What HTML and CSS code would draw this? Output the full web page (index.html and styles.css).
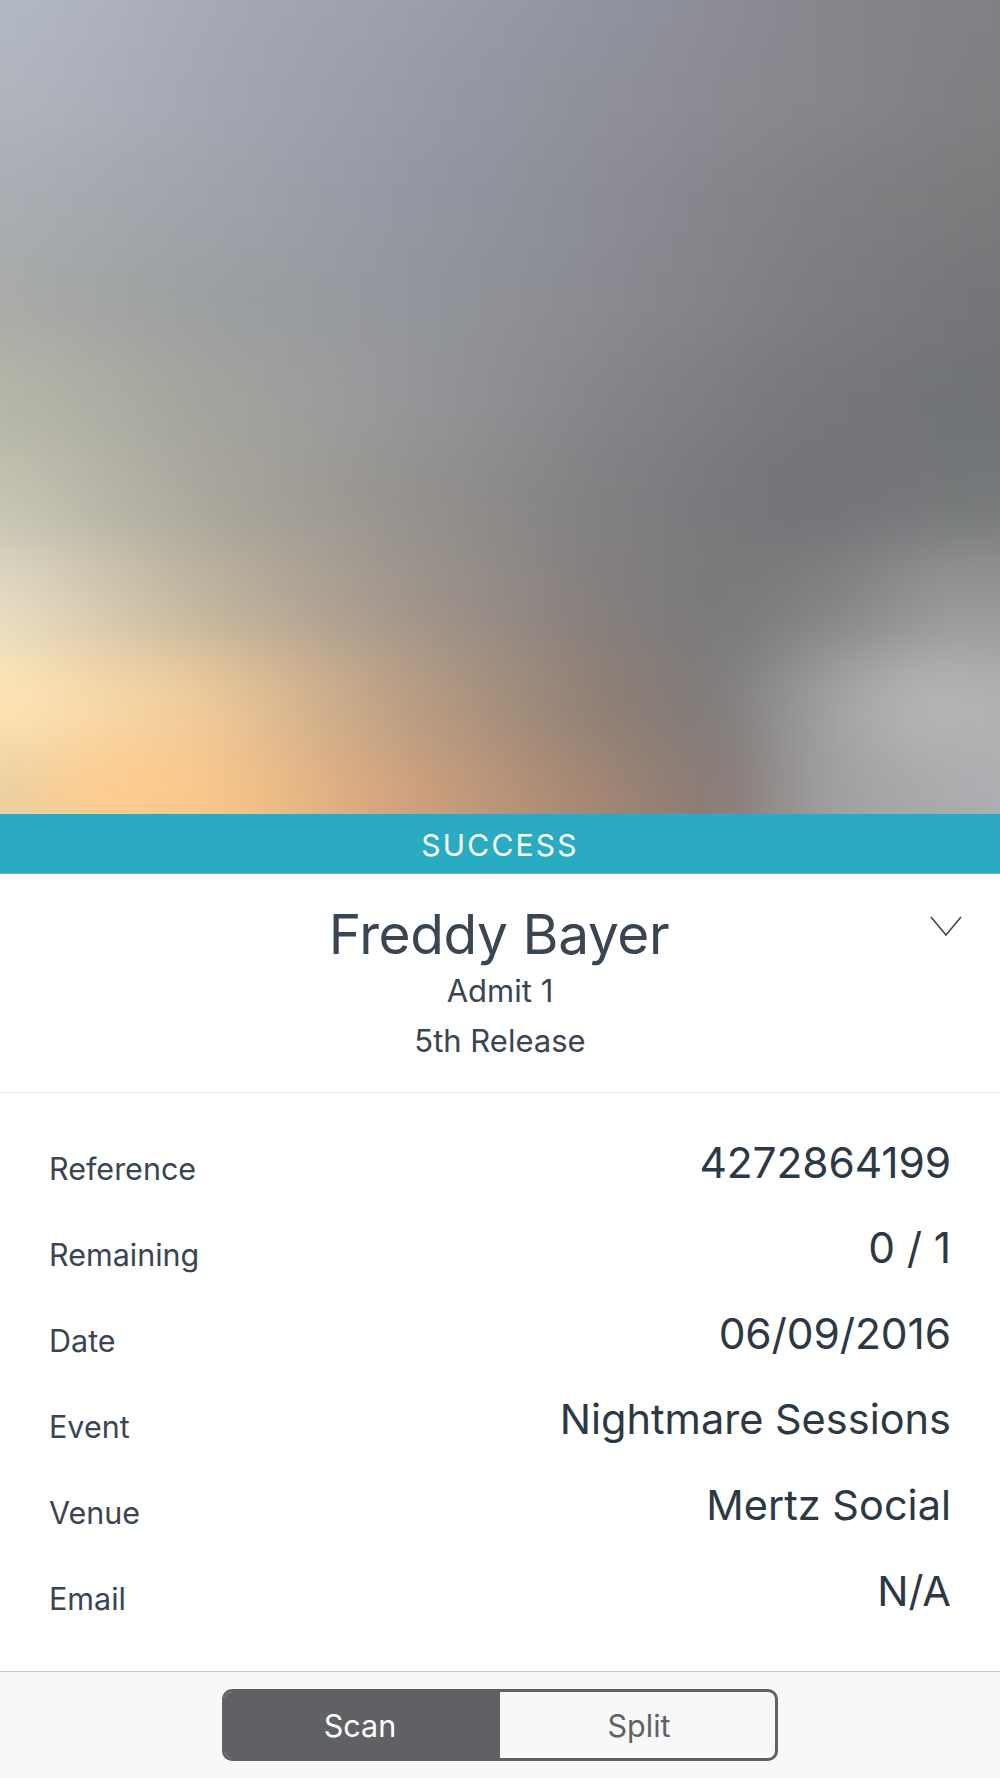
FILE: index.html
```html
<!DOCTYPE html>
<html lang="en">
<head>
<meta charset="utf-8">
<title>Freddy Bayer</title>
<link rel="stylesheet" href="styles.css">
</head>
<body>
<main class="screen">
  <div class="photo">
    <div class="blur">
      <div class="band b0"></div>
      <div class="band b1"></div>
      <div class="band b2"></div>
      <div class="band b3"></div>
      <div class="band b4"></div>
      <div class="band b5"></div>
      <div class="band b6"></div>
      <div class="band b7"></div>
      <div class="band b8"></div>
    </div>
  </div>
  <div class="status">SUCCESS</div>
  <header class="attendee">
    <h1 class="name">Freddy Bayer</h1>
    <p class="sub">Admit 1</p>
    <p class="sub">5th Release</p>
    <svg class="chevron" width="34" height="22" viewBox="0 0 34 22" fill="none"><path d="M2 2 L17 20 L32 2" stroke="#3b4654" stroke-width="1.6"/></svg>
  </header>
  <section class="details">
    <div class="row"><span class="label">Reference</span><span class="value num first">4272864199</span></div>
    <div class="row"><span class="label">Remaining</span><span class="value num">0 / 1</span></div>
    <div class="row"><span class="label">Date</span><span class="value num">06/09/2016</span></div>
    <div class="row"><span class="label">Event</span><span class="value">Nightmare Sessions</span></div>
    <div class="row"><span class="label">Venue</span><span class="value">Mertz Social</span></div>
    <div class="row"><span class="label">Email</span><span class="value">N/A</span></div>
  </section>
  <footer class="toolbar">
    <div class="segments">
      <div class="segment active">Scan</div>
      <div class="segment passive">Split</div>
    </div>
  </footer>
</main>
</body>
</html>
```
FILE: styles.css
```css
* { box-sizing: border-box; }
html, body { margin: 0; padding: 0; }
body { background: #fff; font-family: Inter, "Liberation Sans", sans-serif; color: #3a4553; }
.screen { width: 1000px; height: 1778px; display: flex; flex-direction: column; overflow: hidden; }
.photo { height: 814px; flex: none; overflow: hidden; background: #85858a; }
.blur { width: 1200px; margin: -100px; filter: blur(32px); }
.band { height: 100px; }
.b0 { height: 150px; background: linear-gradient(90deg, #b4bac4 100px, #a6aab7 300px, #9c9fac 500px, #9193a0 700px, #87878e 900px, #7f8185 1100px); }
.b1 { background: linear-gradient(90deg, #b0b5be 100px, #a3a8b3 300px, #989ca8 500px, #8f9099 700px, #87878d 900px, #7f7f82 1100px); }
.b2 { background: linear-gradient(90deg, #a9aeb3 100px, #a0a4ab 300px, #9598a3 500px, #8b8c96 700px, #818185 900px, #7a7a7c 1100px); }
.b3 { background: linear-gradient(90deg, #a9aba8 100px, #9c9fa1 300px, #94979d 500px, #8a8b91 700px, #7e7e82 900px, #747578 1100px); }
.b4 { background: linear-gradient(90deg, #b6b7a8 100px, #a4a49e 300px, #96979a 500px, #85868a 700px, #77787c 900px, #6f7276 1100px); }
.b5 { background: linear-gradient(90deg, #c5c4b3 100px, #aaa79d 300px, #96938f 500px, #818083 700px, #737377 900px, #76797a 1100px); }
.b6 { background: linear-gradient(90deg, #e6dcc4 100px, #c0b59e 300px, #a1968d 500px, #857f7e 700px, #78787a 830px, #858587 950px, #98999a 1050px, #969796 1100px); }
.b7 { background: linear-gradient(90deg, #ffe6b6 100px, #f0cb9a 300px, #bb9f84 500px, #8f7f75 700px, #7d7a7a 820px, #a2a2a3 930px, #b6b7b7 1020px, #b0b1b1 1100px); }
.b8 { height: 164px; background: linear-gradient(90deg, #e8cfa0 100px, #ffcc8e 200px, #f8c68a 320px, #d2a37d 500px, #a28673 700px, #867977 830px, #a0a0a1 920px, #aeafb2 1100px); }
.status {
  height: 60px;
  flex: none;
  background: #2aabc1;
  border-bottom: 1px solid #55bfd1;
  color: #fff;
  font-size: 30px;
  letter-spacing: 2.2px;
  display: flex;
  align-items: center;
  justify-content: center;
  padding-top: 3px;
}
.attendee {
  position: relative;
  height: 219px;
  flex: none;
  border-bottom: 1px solid #e8e9ea;
  text-align: center;
  padding-top: 30px;
}
.name { margin: 0; font-size: 55px; font-weight: 400; line-height: 60px; letter-spacing: -0.4px; padding-right: 2px; }
.sub { margin: 0; font-size: 31px; line-height: 50px; position: relative; top: 2px; }
.chevron { position: absolute; right: 37px; top: 41px; }
.details { flex: 1; padding: 25px 49px 0 49px; }
.row { height: 86px; display: flex; justify-content: space-between; align-items: center; }
.label { font-size: 30.5px; padding-top: 15px; }
.value { font-size: 41.5px; color: #2d3845; }
.value.num { font-size: 42.5px; letter-spacing: -0.1px; }
.value.first { padding-bottom: 0; position: relative; top: 1px; }
.toolbar {
  height: 107px;
  flex: none;
  background: #f8f8f8;
  border-top: 1px solid #c6c6c8;
  display: flex;
  justify-content: center;
  padding-top: 17px;
}
.segments {
  width: 556px;
  height: 72px;
  display: flex;
  border: 3px solid #606165;
  border-radius: 10px;
  overflow: hidden;
}
.segment { flex: 0 0 50%; display: flex; align-items: center; justify-content: center; font-size: 30.5px; color: #606165; }
.segment.active { background: #606165; color: #fff; padding-right: 5px; }
.segment.passive { padding-left: 3px; }
```
